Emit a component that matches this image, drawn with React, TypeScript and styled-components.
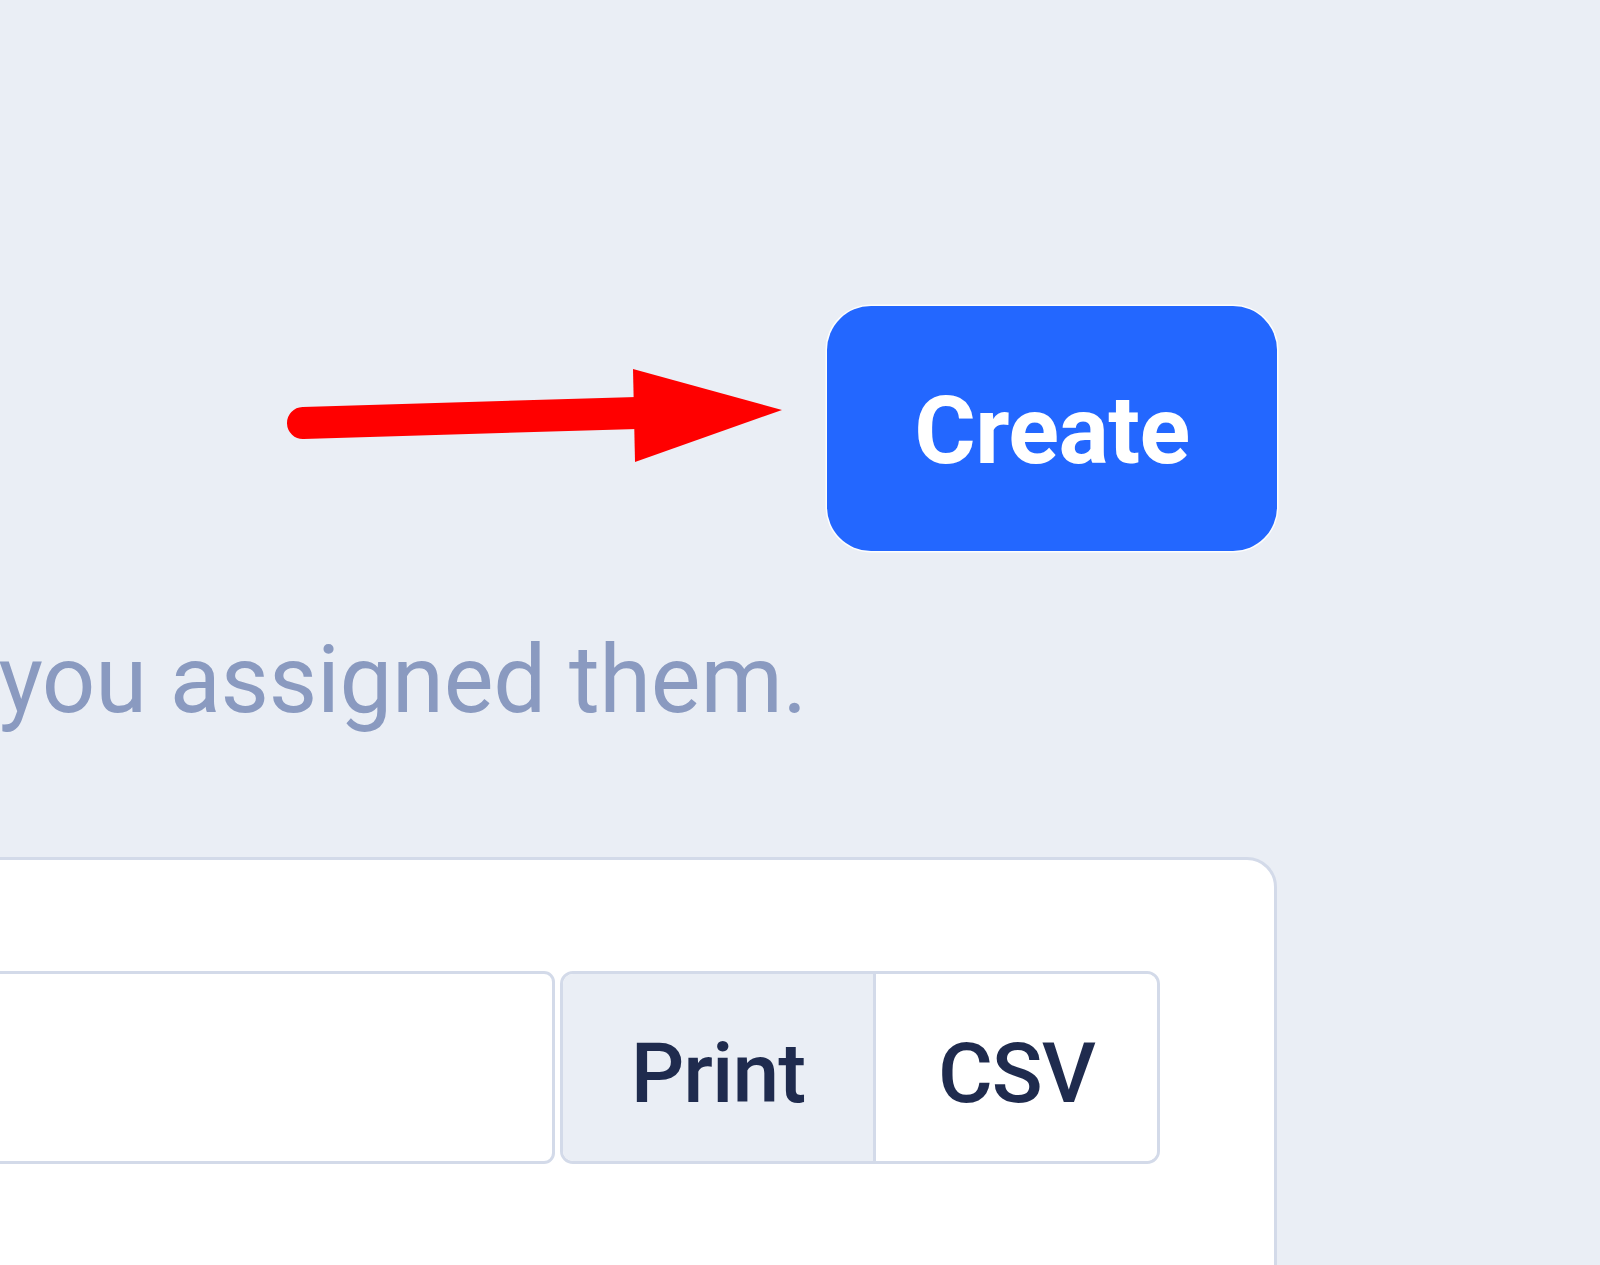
import React from "react";
import styled, { createGlobalStyle } from "styled-components";

const Global = createGlobalStyle`
  html, body {
    margin: 0;
    padding: 0;
    background: #eaeef5;
    overflow: hidden;
  }
  body {
    font-family: Roboto, "Liberation Sans", sans-serif;
    width: 1600px;
    height: 1265px;
  }
  * { box-sizing: border-box; }
`;

const Page = styled.div`
  width: 1600px;
  height: 1265px;
  display: flex;
  justify-content: flex-end;
  padding-right: 323px;
  overflow: hidden;
`;

const Column = styled.div`
  flex: 0 0 1800px;
  width: 1800px;
  display: flex;
  flex-direction: column;
`;

const Header = styled.div`
  margin-top: 306px;
  display: flex;
  justify-content: flex-end;
  align-items: flex-start;
`;

const Arrow = styled.svg`
  margin-top: 58px;
  margin-right: 42px;
  flex: none;
`;

const CreateButton = styled.button`
  width: 450px;
  height: 245px;
  border: none;
  border-radius: 44px;
  background: #2367ff;
  color: #ffffff;
  font-family: Roboto, "Liberation Sans", sans-serif;
  font-weight: 700;
  font-size: 94px;
  letter-spacing: -0.5px;
  box-shadow: 0 0 0 1.5px rgba(255, 255, 255, 0.9);
  padding: 4px 0 0;
  display: flex;
  align-items: center;
  justify-content: center;
`;

const DescRow = styled.div`
  margin-top: 82px;
  display: flex;
  justify-content: flex-end;
  padding-right: 470px;
`;

const Desc = styled.p`
  margin: 0;
  white-space: nowrap;
  font-size: 94px;
  line-height: 1;
  color: #8a9ac0;
  letter-spacing: -0.3px;
`;

const Card = styled.div`
  margin-top: 130px;
  background: #ffffff;
  border: 3px solid #d3dae9;
  border-radius: 30px;
  min-height: 700px;
  padding: 111px 114px 0 0;
`;

const Toolbar = styled.div`
  display: flex;
  align-items: stretch;
  gap: 5px;
  height: 193px;
`;

const SearchInput = styled.input`
  flex: 1;
  height: 100%;
  border: 3px solid #d3dae9;
  border-radius: 11px;
  background: #ffffff;
  outline: none;
`;

const Group = styled.div`
  display: flex;
  border: 3px solid #d3dae9;
  border-radius: 13px;
  overflow: hidden;
`;

const GroupButton = styled.button<{ $w: number; $active?: boolean }>`
  width: ${(p) => p.$w}px;
  height: 100%;
  border: none;
  padding: 12px 0 0;
  background: ${(p) => (p.$active ? "#eaeef5" : "#ffffff")};
  color: #1f2b4e;
  font-family: Roboto, "Liberation Sans", sans-serif;
  font-weight: 500;
  font-size: 84px;
  letter-spacing: -1px;
  display: flex;
  align-items: center;
  justify-content: center;
  & + & {
    border-left: 3px solid #d3dae9;
  }
`;

export default function App() {
  return (
    <>
      <Global />
      <Page>
        <Column>
          <Header>
            <Arrow width="500" height="100" viewBox="0 0 500 100">
              <line
                x1="18"
                y1="59"
                x2="352"
                y2="49"
                stroke="#ff0000"
                strokeWidth="32"
                strokeLinecap="round"
              />
              <polygon points="348,5 497,46 350,98" fill="#ff0000" />
            </Arrow>
            <CreateButton>Create</CreateButton>
          </Header>
          <DescRow>
            <Desc>Manage the roles and permissions you assigned them.</Desc>
          </DescRow>
          <Card>
            <Toolbar>
              <SearchInput type="text" />
              <Group>
                <GroupButton $w={310} $active>
                  Print
                </GroupButton>
                <GroupButton $w={284}>CSV</GroupButton>
              </Group>
            </Toolbar>
          </Card>
        </Column>
      </Page>
    </>
  );
}
